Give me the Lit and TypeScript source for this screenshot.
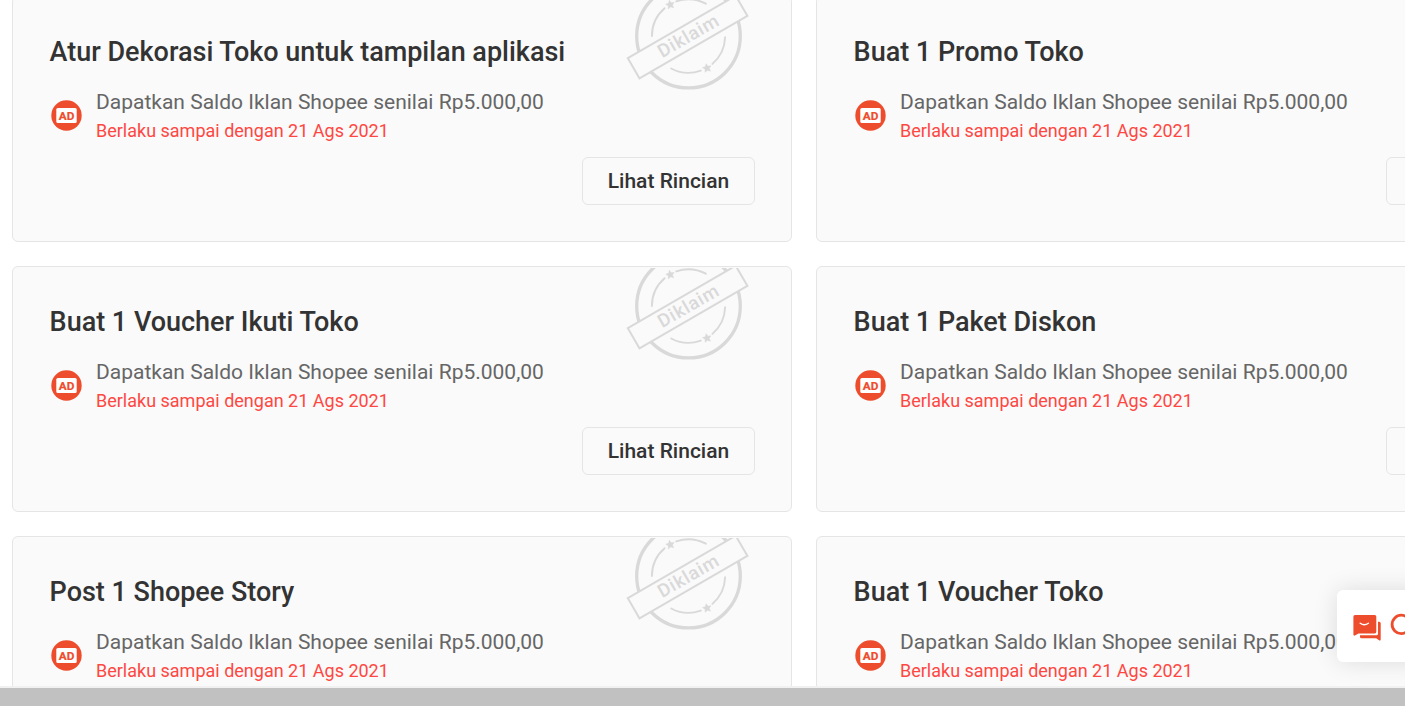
import { LitElement, html, css } from "lit";
import { customElement, property } from "lit/decorators.js";

@customElement("claimed-stamp")
class ClaimedStamp extends LitElement {
  static styles = css`
    :host { display: block; }
    svg { display: block; }
  `;
  render() {
    return html`
      <svg width="126" height="94" viewBox="625 268 126 94" fill="none" stroke="#d9d9d9">
        <circle cx="688.5" cy="306.1" r="51.8" stroke-width="3.3" />
        <g stroke-width="1.9" stroke-linecap="round">
          <path d="M651.9 306 A36.7 36.7 0 0 1 664.6 278.2" />
          <path d="M676.3 271.4 A36.7 36.7 0 0 1 705.8 273.7" />
          <path d="M671.2 338.5 A36.7 36.7 0 0 0 700.8 340.6" />
          <path d="M712.4 333.9 A36.7 36.7 0 0 0 725.1 307.3" />
        </g>
        <g fill="#d9d9d9" stroke="#d9d9d9" stroke-width="0.5">
          <path transform="translate(670.2 274.6) rotate(-12)" d="M0-4.4 1.3-1.6 4.3-1.3 2.1.8 2.7 3.8 0 2.3-2.7 3.8-2.1.8-4.3-1.3-1.3-1.6Z" />
          <path transform="translate(707 338) rotate(-12)" d="M0-4.4 1.3-1.6 4.3-1.3 2.1.8 2.7 3.8 0 2.3-2.7 3.8-2.1.8-4.3-1.3-1.3-1.6Z" />
        </g>
        <g transform="translate(687.6 307) rotate(-30)">
          <rect x="-62.3" y="-11.7" width="124.6" height="23.4" fill="#fafafa" stroke-width="2" />
          <text x="-32.6" y="5.6" textLength="67" fill="#d9d9d9" stroke="none"
            font-family="Roboto, sans-serif" font-size="18.6" font-weight="500">Diklaim</text>
        </g>
      </svg>
    `;
  }
}

@customElement("reward-card")
class RewardCard extends LitElement {
  @property() heading = "";
  @property({ type: Boolean }) claimed = false;

  static styles = css`
    :host {
      display: block;
      position: relative;
      box-sizing: border-box;
      height: 246px;
      padding: 36px;
      border: 1px solid #e5e5e5;
      border-radius: 6px;
      background: #fafafa;
      overflow: hidden;
    }
    .stamp { position: absolute; top: 1px; right: 40px; }
    .title {
      padding: 1px 0 0 0.6px;
      height: 36px;
      line-height: 36px;
      font-size: 27px;
      font-weight: 500;
      letter-spacing: -0.01px;
      color: #333;
      white-space: nowrap;
    }
    .reward { display: flex; align-items: center; margin-top: 15px; height: 60px; gap: 14px; padding-left: 2px; }
    .ad { display: block; flex: none; }
    .info { padding-top: 2px; white-space: nowrap; }
    .amount { font-size: 21px; line-height: 30px; color: #666; }
    .date { font-size: 18px; line-height: 28px; color: #ff4742; }
    .actions { display: flex; justify-content: flex-end; margin-top: 12px; }
    button {
      width: 173px;
      height: 48px;
      padding: 0;
      border: 1px solid #e5e5e5;
      border-radius: 6px;
      background: #fafafa;
      font: 500 21px/46px Roboto, sans-serif;
      color: #333;
    }
  `;
  render() {
    return html`
      ${this.claimed ? html`<claimed-stamp class="stamp"></claimed-stamp>` : null}
      <div class="title">${this.heading}</div>
      <div class="reward">
        <svg class="ad" width="31" height="31" viewBox="0 0 31 31">
          <circle cx="15.5" cy="15.5" r="15.2" fill="#ee4d2d" />
          <rect x="5.3" y="8" width="20.4" height="15" rx="1.6" fill="#fff" />
          <text x="15.5" y="19.5" text-anchor="middle" textLength="15.6" fill="#ee4d2d" stroke="#ee4d2d" stroke-width="0.2"
            font-family="Roboto, sans-serif" font-size="11.8" font-weight="700">AD</text>
        </svg>
        <div class="info">
          <div class="amount">Dapatkan Saldo Iklan Shopee senilai Rp5.000,00</div>
          <div class="date">Berlaku sampai dengan 21 Ags 2021</div>
        </div>
      </div>
      <div class="actions"><button>Lihat Rincian</button></div>
    `;
  }
}

@customElement("app-root")
class AppRoot extends LitElement {
  static styles = css`
    :host {
      display: flex;
      flex-direction: column;
      position: relative;
      width: 100vw;
      height: 100vh;
      overflow: hidden;
      background: #fff;
      font-family: Roboto, sans-serif;
    }
    .viewport { flex: 1; min-height: 0; overflow: hidden; }
    .grid {
      display: grid;
      grid-template-columns: 780px 780px;
      gap: 24px;
      margin: -4px 0 0 12px;
    }
    .scrollbar { flex: none; height: 18px; border-top: 2px solid #f1f1f1; background: #c1c1c1; }
    .chat {
      position: absolute;
      top: 590px;
      left: 1337px;
      display: flex;
      align-items: center;
      box-sizing: border-box;
      width: 120px;
      height: 72px;
      padding-left: 16px;
      border-radius: 6px 0 0 6px;
      background: #fff;
      box-shadow: 0 0 24px rgba(0, 0, 0, 0.12);
    }
    .chat svg { display: block; }
  `;

  cards = [
    { title: "Atur Dekorasi Toko untuk tampilan aplikasi", claimed: true },
    { title: "Buat 1 Promo Toko", claimed: false },
    { title: "Buat 1 Voucher Ikuti Toko", claimed: true },
    { title: "Buat 1 Paket Diskon", claimed: false },
    { title: "Post 1 Shopee Story", claimed: true },
    { title: "Buat 1 Voucher Toko", claimed: false },
  ];

  render() {
    return html`
      <div class="viewport">
        <div class="grid">
          ${this.cards.map((c) => html`<reward-card .heading=${c.title} .claimed=${c.claimed}></reward-card>`)}
        </div>
      </div>
      <div class="scrollbar"></div>
      <div class="chat">
        <svg width="60" height="30" viewBox="1353 611 60 30" fill="#ee4d2d">
          <path d="M1355 615H1374.7A1.6 1.6 0 0 1 1376.3 616.6V631.8A1.6 1.6 0 0 1 1374.7 633.4H1358.6L1354.8 635.6Q1353.4 636 1353.4 634.6V616.6A1.6 1.6 0 0 1 1355 615Z" />
          <path d="M1378 621.8H1379.2A1.5 1.5 0 0 1 1380.7 623.3V639.6Q1380.6 641 1379.4 640.4L1376.2 638.2H1361.5A1.5 1.5 0 0 1 1360 636.7V635.2H1376.5A1.5 1.5 0 0 0 1378 633.7Z" />
          <path d="M1360.2 623.2Q1364.3 626.3 1368.4 623.2" fill="none" stroke="#fff" stroke-width="1.4" stroke-linecap="round" />
          <circle cx="1401.3" cy="624.4" r="9.2" fill="none" stroke="#ee4d2d" stroke-width="2.8" />
        </svg>
      </div>
    `;
  }
}
